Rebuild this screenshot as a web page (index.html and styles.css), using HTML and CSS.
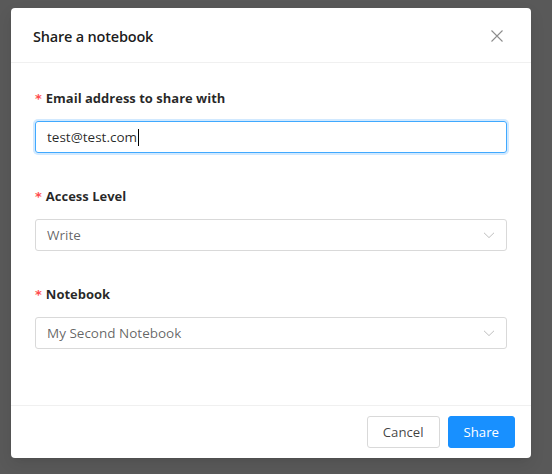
FILE: index.html
```html
<!DOCTYPE html>
<html>
<head>
<meta charset="utf-8">
<link rel="stylesheet" href="styles.css">
</head>
<body>
<div class="overlay">
  <div class="modal">
    <div class="modal-header">
      <div class="title">Share a notebook</div>
      <svg class="close" width="12" height="12" viewBox="0 0 12 12"><path d="M0.5 0.5 L11.5 11.5 M11.5 0.5 L0.5 11.5" stroke="currentColor" stroke-width="1.1" fill="none"/></svg>
    </div>
    <div class="modal-body">
      <div class="form-item">
        <div class="label"><span class="req">*</span>Email address to share with</div>
        <div class="input focused"><span class="val">test@test.com</span><span class="caret"></span></div>
      </div>
      <div class="form-item">
        <div class="label"><span class="req">*</span>Access Level</div>
        <div class="input select"><span class="sel">Write</span>
          <svg class="arrow" width="12" height="12" viewBox="0 0 12 12"><path d="M1 3.8 L6 8.6 L11 3.8" stroke="currentColor" stroke-width="1" fill="none"/></svg>
        </div>
      </div>
      <div class="form-item">
        <div class="label"><span class="req">*</span>Notebook</div>
        <div class="input select"><span class="sel">My Second Notebook</span>
          <svg class="arrow" width="12" height="12" viewBox="0 0 12 12"><path d="M1 3.8 L6 8.6 L11 3.8" stroke="currentColor" stroke-width="1" fill="none"/></svg>
        </div>
      </div>
    </div>
    <div class="modal-footer">
      <button class="btn">Cancel</button>
      <button class="btn primary">Share</button>
    </div>
  </div>
</div>
</body>
</html>
```
FILE: styles.css
```css
html, body { margin: 0; padding: 0; }
body {
  width: 552px;
  height: 474px;
  background: #595959;
  font-family: "Open Sans", "Noto Sans", sans-serif;
  overflow: hidden;
}
.overlay {
  padding: 8px 21px 0 11px;
}
.modal {
  width: 520px;
  background: #fff;
  border-radius: 4px;
  box-shadow: 0 3px 6px -4px rgba(0,0,0,.12), 0 6px 16px rgba(0,0,0,.08);
}
.modal-header {
  height: 55px;
  box-sizing: border-box;
  padding: 0 24px 0 22px;
  display: flex;
  align-items: center;
  justify-content: space-between;
  border-bottom: 1px solid #f0f0f0;
}
.title {
  font-size: 14.5px;
  color: rgba(0,0,0,.9);
  font-weight: 600;
  margin-top: 2px;
  letter-spacing: -0.2px;
}
.close {
  color: rgba(0,0,0,.45);
  margin-right: 4px;
  margin-top: 2px;
}
.modal-body {
  padding: 24px 24px 56px;
  display: flex;
  flex-direction: column;
  gap: 32px;
}
.form-item {
  display: flex;
  flex-direction: column;
  gap: 12px;
}
.label {
  font-size: 13px;
  font-weight: 700;
  line-height: 22px;
  color: rgba(0,0,0,.85);
  height: 22px;
}
.req {
  color: #ff4d4f;
  font-family: "DejaVu Sans", sans-serif;
  font-weight: 700;
  font-size: 13px;
  margin-right: 4px;
}
.input {
  height: 32px;
  box-sizing: border-box;
  border: 1px solid #d9d9d9;
  border-radius: 3px;
  padding: 0 11px;
  display: flex;
  align-items: center;
  font-size: 13.5px;
  color: rgba(0,0,0,.85);
}
.input.focused {
  border-color: #40a9ff;
  box-shadow: 0 0 0 2px rgba(24,144,255,.2);
}
.caret {
  display: inline-block;
  width: 1px;
  height: 17px;
  background: #000;
  margin-left: 1px;
}
.select { justify-content: space-between; }
.sel { color: rgba(0,0,0,.62); }
.arrow { color: #bfbfbf; margin-right: 0; }
.modal-footer {
  border-top: 1px solid #f0f0f0;
  padding: 10px 16px;
  display: flex;
  justify-content: flex-end;
  gap: 8px;
}
.btn {
  height: 32px;
  padding: 0 15px;
  font-family: inherit;
  font-size: 13.2px;
  border: 1px solid #d9d9d9;
  border-radius: 3px;
  background: #fff;
  color: rgba(0,0,0,.75);
}
.btn.primary {
  background: #1890ff;
  border-color: #1890ff;
  color: #fff;
}
```
